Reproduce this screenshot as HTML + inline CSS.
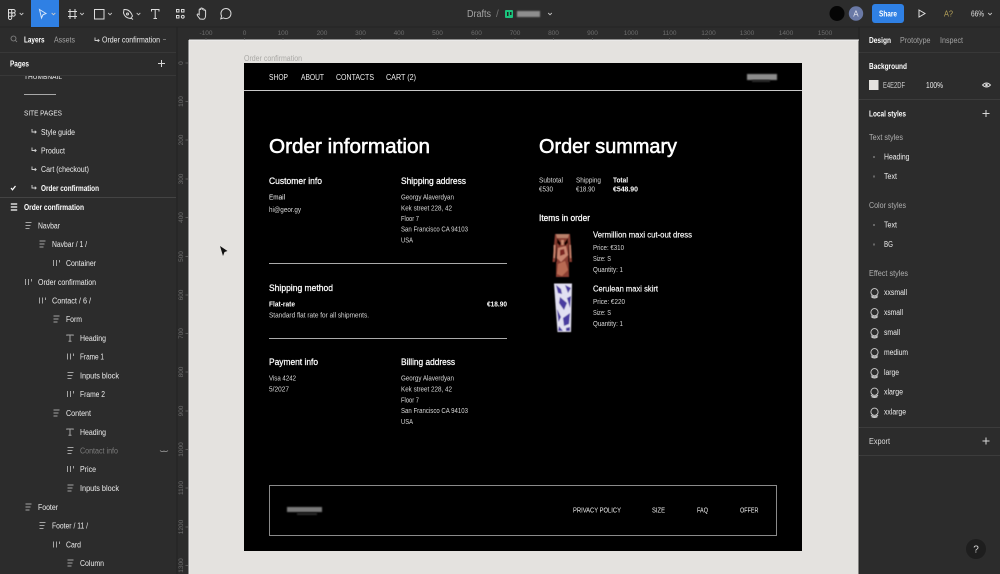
<!DOCTYPE html>
<html><head><meta charset="utf-8"><style>
html,body{margin:0;padding:0;background:#2c2c2c;width:1000px;height:574px;overflow:hidden}
svg{display:block;filter:blur(.25px)}
text{font-family:"Liberation Sans",sans-serif;fill:#ededed;font-size:8px}
.w{fill:#fff}.g{fill:#a2a2a2}.b{font-weight:bold;fill:#fff}
.r{font-size:6.5px;fill:#6c6c6c}
.s{font-size:7px;fill:#d8d8d8}
.m{font-size:9px;fill:#fff;stroke:#fff;stroke-width:.25}
.ic{fill:none;stroke:#d8d8d8;stroke-width:1}
</style></head><body>
<svg width="1000" height="574" viewBox="0 0 1000 574" xmlns="http://www.w3.org/2000/svg">
<defs>
<g id="rows" fill="none" stroke="#a5a5a5" stroke-width="1"><path d="M-3-3H3M-3 0H2M-3 3H1"/></g>
<g id="rowsw" fill="none" stroke="#fff" stroke-width="1.200"><path d="M-3.200-3H3.200M-3.200 0H3.200M-3.200 3H3.200"/></g>
<g id="cols" fill="none" stroke="#a5a5a5" stroke-width="1"><path d="M-3-3V3M0-3V3M3-3V-.5"/></g>
<g id="tt" fill="none" stroke="#a5a5a5" stroke-width="1"><path d="M-3.200-2.200V-3H3.200V-2.200M0-3V3.200M-1.500 3.200H1.500"/></g>
<g id="arr" fill="none" stroke="#cfcfcf" stroke-width=".9"><path d="M0-2V1H4M2.800-.3L4.200 1L2.800 2.300"/></g>
<g id="fx" fill="none" stroke="#d0d0d0" stroke-width=".9"><circle r="3.600" cy="-.8"/><path d="M-3.600 2.800Q0 5 3.600 2.800M-3 4.200Q0 5.800 3 4.200"/></g>
<g id="plus" stroke="#d8d8d8" stroke-width="1"><path d="M-3.500 0H3.500M0-3.500V3.500"/></g>
<g id="chev" fill="none" stroke="#c8c8c8" stroke-width=".9"><path d="M-1.800-1L0 .8L1.800-1"/></g>
<filter id="bl" x="-20%" y="-50%" width="140%" height="200%"><feGaussianBlur stdDeviation=".8"/></filter>
<filter id="sb" x="-20%" y="-20%" width="140%" height="140%"><feGaussianBlur stdDeviation=".45"/></filter>
</defs>

<!-- panels -->
<rect width="1000" height="574" fill="#2c2c2c"/>
<rect x="189" y="40" width="670" height="534" fill="#e4e2df"/>
<rect x="176.500" y="27" width="1" height="547" fill="#222"/>
<rect x="858.500" y="27" width="1" height="547" fill="#222"/>
<rect y="26.500" width="1000" height="1" fill="#232323"/>
<rect x="189" y="39.500" width="670" height="1" fill="#f0f0f0"/>
<rect x="188.500" y="40" width="1" height="534" fill="#efefef"/>

<!-- toolbar -->
<rect x="31" y="0" width="28" height="27" fill="#2f80e4"/>
<g fill="none" stroke="#dcdcdc" stroke-width="1">
<path d="M8.500 9.500h5a1.700 1.700 0 0 1 1.700 1.700v0a1.700 1.700 0 0 1-1.700 1.700h-5zM8.500 12.900h3.200v3.300h-3.200zM8.500 16.200h3.200v1.700a1.600 1.600 0 1 1-3.200 0zM11.700 9.500v6.700M15.200 14.500a1.700 1.700 0 1 1-3.400 0a1.700 1.700 0 1 1 3.400 0z"/>
<path d="M39.500 9.500L46 13.500L43 14.800L41.500 18Z" stroke="#d6e6fb"/>
<path d="M70 9v10M75 9v10M68 11.500h9M68 16.500h9"/>
<rect x="94.500" y="9.500" width="9.500" height="9.500"/>
<path d="M124 9.500Q130 9 132.500 16L130.500 18.500Q125 18 123.500 13ZM131 18L133 19.500"/><circle cx="127.500" cy="14" r="1"/>
<path d="M151.500 11.500V9.500H159V11.500M155.200 9.500V18.500M153.500 18.500H157"/>
<path d="M176.500 9.500h2.500v2.500h-2.500zM181.500 9.500h2.500v2.500h-2.500zM176.500 15.500h2.500v2.500h-2.500z"/><circle cx="182.800" cy="16.800" r="1.400"/>
<path d="M200 19c-1-1.500-2.800-3.300-2.800-4.300 0-1 1.300-.8 2 0V10c0-1.300 1.500-1.300 1.500 0V9c0-1.300 1.700-1.300 1.700 0v.7c0-1.200 1.600-1.200 1.600 0v1c0-1 1.600-1 1.600.2V15c0 2.500-1 4.300-2.500 4.300z"/>
<path d="M220.800 18.800l.8-2.800a5 5 0 1 1 1.900 1.900z"/>
</g>
<use href="#chev" x="21.500" y="14"/><use href="#chev" x="53.500" y="14"/><use href="#chev" x="82" y="14"/><use href="#chev" x="110" y="14"/><use href="#chev" x="138.500" y="14"/>
<text x="467" y="17" textLength="24" lengthAdjust="spacingAndGlyphs" style="font-size:10px;fill:#a5a5a5">Drafts</text>
<text x="496" y="17" style="font-size:10px;fill:#777">/</text>
<rect x="505" y="10" width="8" height="8" rx="1" fill="#1bc47d"/><rect x="507" y="12" width="1.500" height="4" fill="#222"/><rect x="510" y="12" width="1.500" height="3" fill="#222"/>
<rect x="517" y="11" width="23" height="6" fill="#8e8e8e" filter="url(#bl)"/>
<use href="#chev" x="550" y="14"/>
<circle cx="837" cy="13.500" r="7.500" fill="#050505"/>
<circle cx="856" cy="13.500" r="7.200" fill="#6a79a6"/>
<text x="853.300" y="16.500" style="font-size:8px;fill:#e8e8f0">A</text>
<rect x="872" y="4" width="32" height="19" rx="3" fill="#2f80e4"/>
<text x="879" y="16.500" textLength="18" lengthAdjust="spacingAndGlyphs" style="font-size:8px;fill:#fff;font-weight:bold">Share</text>
<path d="M919 10L925 13.500L919 17Z" fill="none" stroke="#e0e0e0"/>
<text x="944" y="16.500" textLength="9" lengthAdjust="spacingAndGlyphs" style="font-size:8px;fill:#b9a55a">A?</text>
<text x="971" y="16.500" textLength="13" lengthAdjust="spacingAndGlyphs" style="font-size:8.500px;fill:#e0e0e0">66%</text>
<use href="#chev" x="990" y="14"/>

<!-- left tabs -->
<circle cx="13.500" cy="38.500" r="2.500" fill="none" stroke="#8a8a8a" stroke-width=".8"/><path d="M15.500 40.500L17 42" stroke="#8a8a8a" stroke-width=".8"/>
<text class="b" x="24" y="42.500" textLength="20.500" lengthAdjust="spacingAndGlyphs">Layers</text>
<text class="g" x="54" y="42.500" textLength="21" lengthAdjust="spacingAndGlyphs">Assets</text>
<use href="#arr" x="95" y="39.500"/>
<text x="102" y="42.500" textLength="58" lengthAdjust="spacingAndGlyphs">Order confirmation</text>
<path d="M163 39.500H166" stroke="#888" stroke-width=".8"/>
<rect y="52" width="176" height="1" fill="#383838"/>
<text class="b" x="10" y="66.500" textLength="19" lengthAdjust="spacingAndGlyphs">Pages</text>
<use href="#plus" x="161.500" y="63.500"/>
<text x="24" y="79" textLength="38" lengthAdjust="spacingAndGlyphs" style="font-size:7px">THUMBNAIL</text>
<rect y="70" width="176" height="5.500" fill="#2c2c2c"/>
<rect y="75" width="176" height="1" fill="#383838"/>
<rect x="24" y="94" width="32" height="1" fill="#a8a8a8"/>
<text x="24" y="115.700" textLength="38" lengthAdjust="spacingAndGlyphs" style="font-size:7.500px">SITE PAGES</text>
<use href="#arr" x="32" y="131"/><text x="41" y="134.800" textLength="34" lengthAdjust="spacingAndGlyphs">Style guide</text>
<use href="#arr" x="32" y="149.500"/><text x="41" y="153.300" textLength="24" lengthAdjust="spacingAndGlyphs">Product</text>
<use href="#arr" x="32" y="168.500"/><text x="41" y="172" textLength="48" lengthAdjust="spacingAndGlyphs">Cart (checkout)</text>
<path d="M11 188L12.500 189.800L15.500 186" fill="none" stroke="#fff" stroke-width="1.200"/>
<use href="#arr" x="32" y="187"/><text class="b" x="41" y="191" textLength="58" lengthAdjust="spacingAndGlyphs">Order confirmation</text>
<rect y="197" width="176" height="1" fill="#444"/>

<use href="#rowsw" x="14" y="207"/><text class="b" x="24" y="210" textLength="60" lengthAdjust="spacingAndGlyphs">Order confirmation</text>
<use href="#rows" x="28.500" y="225.500"/><text x="38" y="228.500" textLength="22" lengthAdjust="spacingAndGlyphs">Navbar</text>
<use href="#rows" x="42.500" y="244"/><text x="52" y="247" textLength="35" lengthAdjust="spacingAndGlyphs">Navbar / 1 /</text>
<use href="#cols" x="56.500" y="263"/><text x="66" y="266" textLength="30" lengthAdjust="spacingAndGlyphs">Container</text>
<use href="#cols" x="28.500" y="282"/><text x="38" y="285" textLength="58" lengthAdjust="spacingAndGlyphs">Order confirmation</text>
<use href="#cols" x="42.500" y="300.500"/><text x="52" y="303.500" textLength="39" lengthAdjust="spacingAndGlyphs">Contact / 6 /</text>
<use href="#rows" x="56.500" y="319"/><text x="66" y="322" textLength="16" lengthAdjust="spacingAndGlyphs">Form</text>
<use href="#tt" x="70" y="338"/><text x="80" y="341" textLength="26" lengthAdjust="spacingAndGlyphs">Heading</text>
<use href="#cols" x="70.500" y="356.500"/><text x="80" y="359.500" textLength="24" lengthAdjust="spacingAndGlyphs">Frame 1</text>
<use href="#rows" x="70.500" y="375.500"/><text x="80" y="378.500" textLength="39" lengthAdjust="spacingAndGlyphs">Inputs block</text>
<use href="#cols" x="70.500" y="394"/><text x="80" y="397" textLength="25" lengthAdjust="spacingAndGlyphs">Frame 2</text>
<use href="#rows" x="56.500" y="413"/><text x="66" y="416" textLength="25" lengthAdjust="spacingAndGlyphs">Content</text>
<use href="#tt" x="70" y="432"/><text x="80" y="435" textLength="26" lengthAdjust="spacingAndGlyphs">Heading</text>
<use href="#rows" x="70.500" y="450.500"/><text x="80" y="453.500" textLength="38" lengthAdjust="spacingAndGlyphs" style="fill:#7c7c7c">Contact info</text>
<path d="M160 450.500Q162 452.500 164 451Q166 452.500 168 450.500" fill="none" stroke="#999" stroke-width=".8"/>
<use href="#cols" x="70.500" y="469"/><text x="80" y="472" textLength="16" lengthAdjust="spacingAndGlyphs">Price</text>
<use href="#rows" x="70.500" y="488"/><text x="80" y="491" textLength="39" lengthAdjust="spacingAndGlyphs">Inputs block</text>
<use href="#rows" x="28.500" y="507"/><text x="38" y="510" textLength="20" lengthAdjust="spacingAndGlyphs">Footer</text>
<use href="#rows" x="42.500" y="525.500"/><text x="52" y="528.500" textLength="36" lengthAdjust="spacingAndGlyphs">Footer / 11 /</text>
<use href="#cols" x="56.500" y="544.500"/><text x="66" y="547.500" textLength="15" lengthAdjust="spacingAndGlyphs">Card</text>
<use href="#rows" x="70.500" y="563"/><text x="80" y="566" textLength="24" lengthAdjust="spacingAndGlyphs">Column</text>

<!-- top ruler -->
<g>
<text class="r" x="206" y="35" text-anchor="middle">-100</text><text class="r" x="244.500" y="35" text-anchor="middle">0</text><text class="r" x="283" y="35" text-anchor="middle">100</text><text class="r" x="322" y="35" text-anchor="middle">200</text><text class="r" x="360.500" y="35" text-anchor="middle">300</text><text class="r" x="399" y="35" text-anchor="middle">400</text><text class="r" x="437.500" y="35" text-anchor="middle">500</text><text class="r" x="476.500" y="35" text-anchor="middle">600</text><text class="r" x="515" y="35" text-anchor="middle">700</text><text class="r" x="553.500" y="35" text-anchor="middle">800</text><text class="r" x="592.500" y="35" text-anchor="middle">900</text><text class="r" x="631" y="35" text-anchor="middle">1000</text><text class="r" x="669.500" y="35" text-anchor="middle">1100</text><text class="r" x="708.500" y="35" text-anchor="middle">1200</text><text class="r" x="747" y="35" text-anchor="middle">1300</text><text class="r" x="786" y="35" text-anchor="middle">1400</text><text class="r" x="825" y="35" text-anchor="middle">1500</text>
</g>
<path d="M206 38v2M244.500 38v2M283 38v2M322 38v2M360.500 38v2M399 38v2M437.500 38v2M476.500 38v2M515 38v2M553.500 38v2M592.500 38v2M631 38v2M669.500 38v2M708.500 38v2M747 38v2M786 38v2M825 38v2" stroke="#666" stroke-width=".7"/>
<!-- left ruler -->
<text class="r" text-anchor="middle" transform="translate(183 63) rotate(-90)">0</text>
<text class="r" text-anchor="middle" transform="translate(183 101.500) rotate(-90)">100</text>
<text class="r" text-anchor="middle" transform="translate(183 140) rotate(-90)">200</text>
<text class="r" text-anchor="middle" transform="translate(183 179) rotate(-90)">300</text>
<text class="r" text-anchor="middle" transform="translate(183 217.500) rotate(-90)">400</text>
<text class="r" text-anchor="middle" transform="translate(183 256.500) rotate(-90)">500</text>
<text class="r" text-anchor="middle" transform="translate(183 295) rotate(-90)">600</text>
<text class="r" text-anchor="middle" transform="translate(183 333.500) rotate(-90)">700</text>
<text class="r" text-anchor="middle" transform="translate(183 372) rotate(-90)">800</text>
<text class="r" text-anchor="middle" transform="translate(183 411) rotate(-90)">900</text>
<text class="r" text-anchor="middle" transform="translate(183 449.500) rotate(-90)">1000</text>
<text class="r" text-anchor="middle" transform="translate(183 488) rotate(-90)">1100</text>
<text class="r" text-anchor="middle" transform="translate(183 527) rotate(-90)">1200</text>
<text class="r" text-anchor="middle" transform="translate(183 565.500) rotate(-90)">1300</text>
<path d="M185.500 63h2.500M185.500 101.500h2.500M185.500 140h2.500M185.500 179h2.500M185.500 217.500h2.500M185.500 256.500h2.500M185.500 295h2.500M185.500 333.500h2.500M185.500 372h2.500M185.500 411h2.500M185.500 449.500h2.500M185.500 488h2.500M185.500 527h2.500M185.500 565.500h2.500" stroke="#666" stroke-width=".7"/>

<!-- cursor -->
<path d="M220 246L227.500 251L224.500 252L223 256Z" fill="#111"/>

<!-- frame -->
<text x="244" y="61" textLength="58" lengthAdjust="spacingAndGlyphs" style="fill:#a9a8a5">Order confirmation</text>
<rect x="244" y="63" width="558" height="488" fill="#000"/>
<rect x="244" y="90" width="558" height="1" fill="#c8c8c8"/>
<text x="269" y="80" textLength="19" lengthAdjust="spacingAndGlyphs" style="fill:#f0f0f0">SHOP</text>
<text x="301" y="80" textLength="23" lengthAdjust="spacingAndGlyphs" style="fill:#f0f0f0">ABOUT</text>
<text x="336" y="80" textLength="38" lengthAdjust="spacingAndGlyphs" style="fill:#f0f0f0">CONTACTS</text>
<text x="386" y="80" textLength="30" lengthAdjust="spacingAndGlyphs" style="fill:#f0f0f0">CART (2)</text>
<rect x="747" y="74" width="30" height="6" fill="#8c8c8c" filter="url(#bl)"/>
<rect x="752" y="80" width="18" height="2" fill="#2a2a2a" filter="url(#bl)"/>

<text x="269" y="153" textLength="161" lengthAdjust="spacingAndGlyphs" style="font-size:20.500px;fill:#fff;stroke:#fff;stroke-width:.55">Order information</text>
<text x="539" y="153" textLength="138" lengthAdjust="spacingAndGlyphs" style="font-size:20.500px;fill:#fff;stroke:#fff;stroke-width:.55">Order summary</text>

<text class="m" x="269" y="184" textLength="53" lengthAdjust="spacingAndGlyphs">Customer info</text>
<text class="m" x="401" y="184" textLength="65" lengthAdjust="spacingAndGlyphs">Shipping address</text>
<text class="s" x="269" y="199.500" textLength="16" lengthAdjust="spacingAndGlyphs" style="fill:#fff">Email</text>
<text class="s" x="269" y="212" textLength="32" lengthAdjust="spacingAndGlyphs">hi@geor.gy</text>
<text class="s" x="401" y="199.500" textLength="53" lengthAdjust="spacingAndGlyphs">Georgy Alaverdyan</text>
<text class="s" x="401" y="210.500" textLength="51" lengthAdjust="spacingAndGlyphs">Kek street 228, 42</text>
<text class="s" x="401" y="221" textLength="18" lengthAdjust="spacingAndGlyphs">Floor 7</text>
<text class="s" x="401" y="231.500" textLength="67" lengthAdjust="spacingAndGlyphs">San Francisco CA 94103</text>
<text class="s" x="401" y="242.500" textLength="12" lengthAdjust="spacingAndGlyphs">USA</text>
<rect x="269" y="263" width="238" height="1" fill="#aaa"/>
<text class="m" x="269" y="291" textLength="64" lengthAdjust="spacingAndGlyphs">Shipping method</text>
<text class="s" x="269" y="306.500" textLength="26" lengthAdjust="spacingAndGlyphs" style="fill:#fff;font-weight:bold">Flat-rate</text>
<text class="s" x="487" y="306.500" textLength="20" lengthAdjust="spacingAndGlyphs" style="fill:#fff;font-weight:bold">€18.90</text>
<text class="s" x="269" y="317.500" textLength="100" lengthAdjust="spacingAndGlyphs">Standard flat rate for all shipments.</text>
<rect x="269" y="338" width="238" height="1" fill="#aaa"/>
<text class="m" x="269" y="365" textLength="49" lengthAdjust="spacingAndGlyphs">Payment info</text>
<text class="m" x="401" y="365" textLength="54" lengthAdjust="spacingAndGlyphs">Billing address</text>
<text class="s" x="269" y="380.500" textLength="27" lengthAdjust="spacingAndGlyphs">Visa 4242</text>
<text class="s" x="269" y="391.500" textLength="20" lengthAdjust="spacingAndGlyphs">5/2027</text>
<text class="s" x="401" y="380.500" textLength="53" lengthAdjust="spacingAndGlyphs">Georgy Alaverdyan</text>
<text class="s" x="401" y="391.500" textLength="51" lengthAdjust="spacingAndGlyphs">Kek street 228, 42</text>
<text class="s" x="401" y="402.500" textLength="18" lengthAdjust="spacingAndGlyphs">Floor 7</text>
<text class="s" x="401" y="413" textLength="67" lengthAdjust="spacingAndGlyphs">San Francisco CA 94103</text>
<text class="s" x="401" y="424" textLength="12" lengthAdjust="spacingAndGlyphs">USA</text>

<text class="s" x="539" y="182.500" textLength="24" lengthAdjust="spacingAndGlyphs">Subtotal</text>
<text class="s" x="539" y="191.500" textLength="14" lengthAdjust="spacingAndGlyphs">€530</text>
<text class="s" x="576" y="182.500" textLength="25" lengthAdjust="spacingAndGlyphs">Shipping</text>
<text class="s" x="576" y="191.500" textLength="19" lengthAdjust="spacingAndGlyphs">€18.90</text>
<text class="s" x="613" y="182.500" textLength="15" lengthAdjust="spacingAndGlyphs" style="fill:#fff;font-weight:bold">Total</text>
<text class="s" x="613" y="191.500" textLength="25" lengthAdjust="spacingAndGlyphs" style="fill:#fff;font-weight:bold">€548.90</text>
<text class="m" x="539" y="221" textLength="51" lengthAdjust="spacingAndGlyphs">Items in order</text>
<text class="s" x="593" y="237.500" textLength="99" lengthAdjust="spacingAndGlyphs" style="fill:#fff;font-size:8px;stroke:#fff;stroke-width:.15">Vermillion maxi cut-out dress</text>
<text class="s" x="593" y="250" textLength="31" lengthAdjust="spacingAndGlyphs">Price: €310</text>
<text class="s" x="593" y="261" textLength="18" lengthAdjust="spacingAndGlyphs">Size: S</text>
<text class="s" x="593" y="272" textLength="30" lengthAdjust="spacingAndGlyphs">Quantity: 1</text>
<text class="s" x="593" y="291.500" textLength="65" lengthAdjust="spacingAndGlyphs" style="fill:#fff;font-size:8px;stroke:#fff;stroke-width:.15">Cerulean maxi skirt</text>
<text class="s" x="593" y="304" textLength="32" lengthAdjust="spacingAndGlyphs">Price: €220</text>
<text class="s" x="593" y="315" textLength="18" lengthAdjust="spacingAndGlyphs">Size: S</text>
<text class="s" x="593" y="326" textLength="30" lengthAdjust="spacingAndGlyphs">Quantity: 1</text>

<!-- dress -->
<g filter="url(#sb)">
<path d="M555 234H570L572 262H569.500L568.500 248L569 277H556L556.500 248L555 262H552.500Z" fill="#8a3d30"/>
<path d="M556 234H569L568 238H557Z" fill="#b9806a"/>
<path d="M557 238L561 243L560 246L557 243ZM568 238L564 243L565 246L568 243Z" fill="#120503"/>
<path d="M561 240H564L563.500 245H561.500Z" fill="#c98a70"/>
<path d="M558 248L566 246L568 255L561 262L557 258Z" fill="#c98570"/>
<path d="M560 250L564 249L565 254L560 256Z" fill="#7a2620"/>
<path d="M558 264L565 261L568 270L562 276L557 274Z" fill="#b86a52"/>
<path d="M553.500 245H555.500L555 258H553.500ZM569.500 245H571L571.500 258H570Z" fill="#c8856e"/>
<path d="M556.500 240L555.800 262H557ZM568.500 240L569.300 262H568Z" fill="#000"/>
</g>
<!-- skirt -->
<g filter="url(#sb)">
<path d="M554 283.500H572L571 332H557.500L555.500 305Z" fill="#e2e0f2"/>
<g fill="#4a3aa0"><path d="M556 285L561 289L562 294L558 293Z"/><path d="M565 285L571 288L568 293Z"/><path d="M560 297L567 303L564 310L559 303Z"/><path d="M567 298L571 296L570 308Z"/><path d="M557 309L561 317L558.500 322Z"/><path d="M563 318L570 313L569 324L564 326Z"/><path d="M559 326L563 331H558Z"/><path d="M566 328L570 327L570 331H566Z"/></g>
</g>

<!-- footer -->
<rect x="269.500" y="485.500" width="507" height="50" fill="none" stroke="#8a8a8a" stroke-width="1"/>
<rect x="287" y="507" width="35" height="5" fill="#7a7a7a" filter="url(#bl)"/>
<rect x="297" y="513" width="20" height="2" fill="#2a2a2a" filter="url(#bl)"/>
<text x="573" y="512.700" textLength="48" lengthAdjust="spacingAndGlyphs" class="s" style="fill:#f0f0f0">PRIVACY POLICY</text>
<text x="652" y="512.700" textLength="13" lengthAdjust="spacingAndGlyphs" class="s" style="fill:#f0f0f0">SIZE</text>
<text x="697" y="512.700" textLength="11" lengthAdjust="spacingAndGlyphs" class="s" style="fill:#f0f0f0">FAQ</text>
<text x="740" y="512.700" textLength="18.500" lengthAdjust="spacingAndGlyphs" class="s" style="fill:#f0f0f0">OFFER</text>

<!-- right panel -->
<text class="b" x="869" y="42.800" textLength="22" lengthAdjust="spacingAndGlyphs">Design</text>
<text class="g" x="900" y="42.800" textLength="30.500" lengthAdjust="spacingAndGlyphs">Prototype</text>
<text class="g" x="940" y="42.800" textLength="23" lengthAdjust="spacingAndGlyphs">Inspect</text>
<rect x="859" y="52" width="141" height="1" fill="#383838"/>
<text class="b" x="869" y="69" textLength="38" lengthAdjust="spacingAndGlyphs">Background</text>
<rect x="869" y="80" width="9.500" height="10" fill="#e4e2df"/>
<text x="883" y="87.800" textLength="22" lengthAdjust="spacingAndGlyphs" style="fill:#cfcfcf">E4E2DF</text>
<text x="926" y="87.800" textLength="17" lengthAdjust="spacingAndGlyphs">100%</text>
<path d="M982.500 85Q986.500 81 990.500 85Q986.500 89 982.500 85Z" fill="none" stroke="#ddd" stroke-width=".9"/><circle cx="986.500" cy="85" r="1.300" fill="#ddd"/>
<rect x="859" y="99" width="141" height="1" fill="#3c3c3c"/>
<text class="b" x="869" y="116.500" textLength="37" lengthAdjust="spacingAndGlyphs">Local styles</text>
<use href="#plus" x="986" y="113.500"/>
<text x="869" y="139.800" textLength="34" lengthAdjust="spacingAndGlyphs" style="fill:#b0b0b0">Text styles</text>
<rect x="873" y="156" width="2" height="2" fill="#666"/><text x="884" y="159.500" textLength="25.500" lengthAdjust="spacingAndGlyphs">Heading</text>
<rect x="873" y="175.500" width="2" height="2" fill="#666"/><text x="884" y="179" textLength="13" lengthAdjust="spacingAndGlyphs">Text</text>
<text x="869" y="207.800" textLength="37" lengthAdjust="spacingAndGlyphs" style="fill:#b0b0b0">Color styles</text>
<rect x="873" y="224" width="2" height="2" fill="#666"/><text x="884" y="227.500" textLength="13" lengthAdjust="spacingAndGlyphs">Text</text>
<rect x="873" y="243.500" width="2" height="2" fill="#666"/><text x="884" y="247" textLength="9" lengthAdjust="spacingAndGlyphs">BG</text>
<text x="869" y="275.800" textLength="39" lengthAdjust="spacingAndGlyphs" style="fill:#b0b0b0">Effect styles</text>
<use href="#fx" x="874.500" y="293"/><text x="884" y="295" textLength="23" lengthAdjust="spacingAndGlyphs">xxsmall</text>
<use href="#fx" x="874.500" y="313"/><text x="884" y="315" textLength="19" lengthAdjust="spacingAndGlyphs">xsmall</text>
<use href="#fx" x="874.500" y="333"/><text x="884" y="335" textLength="16" lengthAdjust="spacingAndGlyphs">small</text>
<use href="#fx" x="874.500" y="353"/><text x="884" y="355" textLength="24" lengthAdjust="spacingAndGlyphs">medium</text>
<use href="#fx" x="874.500" y="373"/><text x="884" y="375" textLength="15" lengthAdjust="spacingAndGlyphs">large</text>
<use href="#fx" x="874.500" y="392.500"/><text x="884" y="394.500" textLength="19" lengthAdjust="spacingAndGlyphs">xlarge</text>
<use href="#fx" x="874.500" y="412.500"/><text x="884" y="414.500" textLength="22" lengthAdjust="spacingAndGlyphs">xxlarge</text>
<rect x="859" y="427" width="141" height="1" fill="#3c3c3c"/>
<text x="869" y="443.800" textLength="21" lengthAdjust="spacingAndGlyphs" style="fill:#ddd">Export</text>
<use href="#plus" x="986" y="441"/>
<rect x="859" y="455" width="141" height="1" fill="#3c3c3c"/>
<circle cx="976" cy="549" r="10" fill="#1e1e1e"/>
<text x="973.300" y="552.700" style="font-size:10px;fill:#ddd">?</text>
</svg>
</body></html>
